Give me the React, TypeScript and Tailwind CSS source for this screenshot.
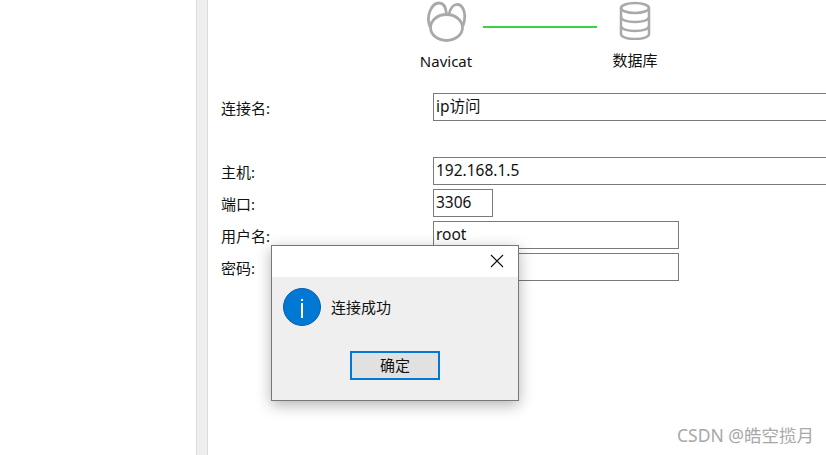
const fontStack = "font-['Noto_Sans','Noto_Sans_CJK_SC',sans-serif]";

function NavicatLogo() {
  return (
    <svg width="42" height="42" viewBox="0 0 42 42" fill="none" stroke="#a9a9a9" strokeWidth="2.8">
      <ellipse cx="21.5" cy="27.5" rx="16" ry="13" />
      <path d="M5 27C0.5 15 7 3 14 3C19 3 21 8 21.5 14" />
      <path d="M24 14C25.500 8 29 4 33 4.500C38.500 5.500 42 15 38 26" />
    </svg>
  );
}

function DatabaseIcon() {
  return (
    <svg width="32" height="40" viewBox="0 0 32 40" fill="none" stroke="#a9a9a9" strokeWidth="2.5">
      <ellipse cx="16" cy="8" rx="14" ry="5" />
      <path d="M2 8V34C2 37 8 39 16 39C24 39 30 37 30 34V8" />
      <path d="M2 17C2 20 8 22 16 22C24 22 30 20 30 17" />
      <path d="M2 26C2 29 8 31 16 31C24 31 30 29 30 26" />
    </svg>
  );
}

function Row({ label, value, width }: { label: string; value: string; width: string }) {
  return (
    <div className="flex h-7 items-center">
      <div className="w-[212px] shrink-0 pt-0.5">{label}</div>
      <div className={`${width} h-7 shrink-0 border border-[#7a7a7a] bg-white pl-0.5 text-[15.5px] leading-[24px]`}>{value}</div>
    </div>
  );
}

export default function App() {
  return (
    <div className={`${fontStack} relative flex h-[455px] w-[826px] overflow-hidden bg-white text-[15px] text-[#111]`}>
      <div className="w-[196px] shrink-0" />
      <div className="w-[12px] shrink-0 border-x border-[#dcdcdc] bg-[#eeeeee]" />

      <div className="min-w-0 flex-1 pl-[13px]">
        <div className="flex h-[93px] pl-[198px]">
          <div className="flex w-[54px] flex-col items-center">
            <NavicatLogo />
            <div className="mt-2">Navicat</div>
          </div>
          <div className="ml-[10px] mt-[26px] h-0.5 w-[114px] bg-[#3bd04a]" />
          <div className="ml-[14px] flex w-[48px] flex-col items-center">
            <DatabaseIcon />
            <div className="mt-[9px]">数据库</div>
          </div>
        </div>

        <Row label="连接名:" value="ip访问" width="w-[420px]" />
        <div className="h-9" />
        <div className="flex flex-col gap-1">
          <Row label="主机:" value="192.168.1.5" width="w-[420px]" />
          <Row label="端口:" value="3306" width="w-[60px]" />
          <Row label="用户名:" value="root" width="w-[246px]" />
          <Row label="密码:" value="" width="w-[246px]" />
        </div>
      </div>

      {/* message box */}
      <div className="absolute left-[271px] top-[245px] flex h-[156px] w-[248px] flex-col border border-[#777] bg-[#efefef] shadow-[0_4px_14px_rgba(0,0,0,0.3)]">
        <div className="flex h-[31px] justify-end bg-white pr-[14px] pt-[8px]">
          <svg width="14" height="14" viewBox="0 0 14 14" stroke="#111" strokeWidth="1.1">
            <path d="M1 1L13 13M13 1L1 13" />
          </svg>
        </div>
        <div className="flex items-center gap-2.5 pl-[11px] pt-[11px]">
          <div className="flex size-[38px] flex-col items-center rounded-full border border-[#0b5ea8] bg-[#0078d4] pt-[10px]">
            <div className="h-0.5 w-0.5 bg-white" />
            <div className="mt-[2px] h-[15px] w-0.5 bg-white" />
          </div>
          <div>连接成功</div>
        </div>
        <div className="flex justify-center pt-[25px]">
          <div className="flex h-[29px] w-[90px] items-center justify-center border-2 border-[#0078d4] bg-[#e1e1e1]">确定</div>
        </div>
      </div>

      <div className="absolute bottom-[7px] right-[12px] text-[17.5px] text-[#a8a8a8]">CSDN @皓空揽月</div>
    </div>
  );
}
